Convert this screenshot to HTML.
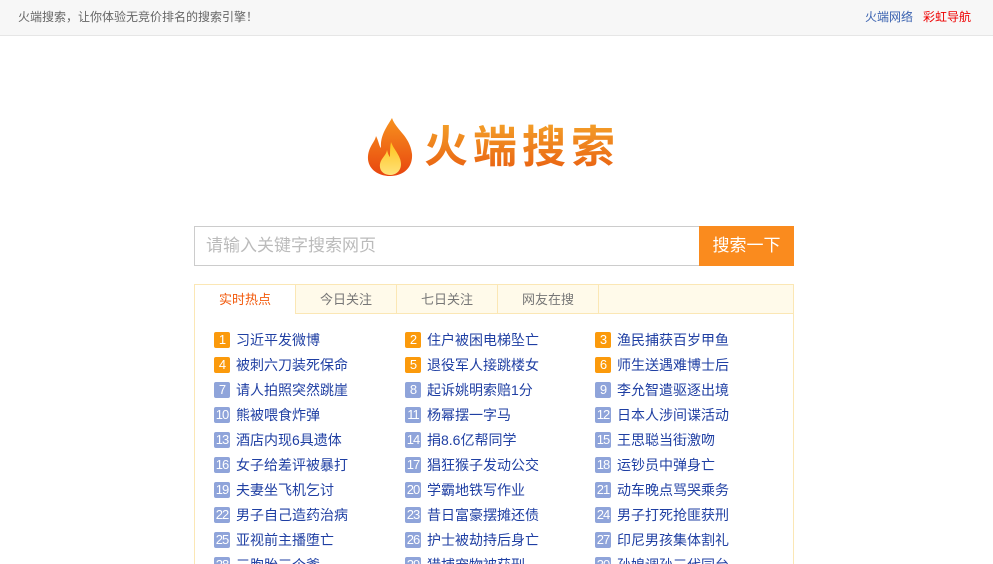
<!DOCTYPE html>
<html style="overflow:hidden;height:564px"><head><meta charset="utf-8"><style>
*{margin:0;padding:0;box-sizing:border-box}
body{width:993px;height:564px;overflow:hidden;background:#fff;font-family:"Liberation Sans","Noto Sans CJK SC",sans-serif;position:relative}
.top{height:36px;background:#f7f7f7;border-bottom:1px solid #e6e6e6;font-size:12px;color:#666;line-height:34px;padding-left:18px;position:relative}
.top .r{position:absolute;right:22px;top:0}
.top .r a{color:#3a62b0;text-decoration:none;margin-left:10px}
.top .r a.red{color:#e00}
.logo{position:absolute;left:366px;top:116px}
.lt{position:absolute;left:424px;top:120px;font-size:44px;font-weight:bold;letter-spacing:5px;background:linear-gradient(#f4a32a,#e85a0f);-webkit-background-clip:text;color:transparent;line-height:56px}
.sb{position:absolute;left:194px;top:226px;width:505px;height:40px;border:1px solid #ccc;border-right:none;font-size:17px;color:#bbb;line-height:38px;padding-left:11px}
.btn{position:absolute;left:699px;top:226px;width:95px;height:40px;background:#fa8b1e;color:#fff;font-size:17px;line-height:40px;text-align:center}
.box{position:absolute;left:194px;top:284px;width:600px;height:300px;border:1px solid #fbe7b5}
.tabs{height:29px;background:#fffaea;border-bottom:1px solid #fbe7b5;display:flex}
.tabs div{width:101px;text-align:center;font-size:13px;color:#777;line-height:29px;border-right:1px solid #fbe7b5}
.tabs div.a{background:#fff;color:#f25a0d;height:29px}
.item{position:absolute;font-size:14px;color:#1f3fa3;line-height:18px;white-space:nowrap;display:flex;align-items:center}
.item b{display:inline-block;width:16px;height:16px;border-radius:2px;background:#8fa4da;color:#fff;font-weight:normal;font-size:13px;text-align:center;line-height:16px;margin-right:6px;letter-spacing:-1px}
.item b.o{background:#fb9a0c}
</style></head><body>
<div class="top">火端搜索，让你体验无竞价排名的搜索引擎！<div class="r"><a>火端网络</a><a class="red">彩虹导航</a></div></div>
<svg class="logo" width="48" height="62" viewBox="0 0 48 62"><defs><linearGradient id="g" x1="0" y1="0" x2="0" y2="1"><stop offset="0" stop-color="#f7921e"/><stop offset="1" stop-color="#e8450f"/></linearGradient><linearGradient id="h" x1="0" y1="0" x2="0" y2="1"><stop offset="0" stop-color="#ffc21a"/><stop offset="1" stop-color="#ffe27a"/></linearGradient></defs>
<path d="M26 2C30 14 44 20 46 38C47 52 37 60 24 60C11 60 1 52 2 40C3 30 9 26 10 20C13 26 13 30 15 32C14 20 20 12 26 2Z" fill="url(#g)"/>
<path d="M25 26C28 34 35 40 35 48C35 55 30 59 24 59C18 59 13 55 14 48C15 42 20 40 21 34C22 38 23 40 24 41C24 36 24 31 25 26Z" fill="url(#h)"/></svg>
<div class="lt">火端搜索</div>
<div class="sb">请输入关键字搜索网页</div>
<div class="btn">搜索一下</div>
<div class="box"><div class="tabs"><div class="a">实时热点</div><div>今日关注</div><div>七日关注</div><div>网友在搜</div></div></div>
<div class="item" style="left:214px;top:331px"><b class="o">1</b>习近平发微博</div>
<div class="item" style="left:405px;top:331px"><b class="o">2</b>住户被困电梯坠亡</div>
<div class="item" style="left:595px;top:331px"><b class="o">3</b>渔民捕获百岁甲鱼</div>
<div class="item" style="left:214px;top:356px"><b class="o">4</b>被刺六刀装死保命</div>
<div class="item" style="left:405px;top:356px"><b class="o">5</b>退役军人接跳楼女</div>
<div class="item" style="left:595px;top:356px"><b class="o">6</b>师生送遇难博士后</div>
<div class="item" style="left:214px;top:381px"><b>7</b>请人拍照突然跳崖</div>
<div class="item" style="left:405px;top:381px"><b>8</b>起诉姚明索赔1分</div>
<div class="item" style="left:595px;top:381px"><b>9</b>李允智遣驱逐出境</div>
<div class="item" style="left:214px;top:406px"><b>10</b>熊被喂食炸弹</div>
<div class="item" style="left:405px;top:406px"><b>11</b>杨幂摆一字马</div>
<div class="item" style="left:595px;top:406px"><b>12</b>日本人涉间谍活动</div>
<div class="item" style="left:214px;top:431px"><b>13</b>酒店内现6具遗体</div>
<div class="item" style="left:405px;top:431px"><b>14</b>捐8.6亿帮同学</div>
<div class="item" style="left:595px;top:431px"><b>15</b>王思聪当街激吻</div>
<div class="item" style="left:214px;top:456px"><b>16</b>女子给差评被暴打</div>
<div class="item" style="left:405px;top:456px"><b>17</b>猖狂猴子发动公交</div>
<div class="item" style="left:595px;top:456px"><b>18</b>运钞员中弹身亡</div>
<div class="item" style="left:214px;top:481px"><b>19</b>夫妻坐飞机乞讨</div>
<div class="item" style="left:405px;top:481px"><b>20</b>学霸地铁写作业</div>
<div class="item" style="left:595px;top:481px"><b>21</b>动车晚点骂哭乘务</div>
<div class="item" style="left:214px;top:506px"><b>22</b>男子自己造药治病</div>
<div class="item" style="left:405px;top:506px"><b>23</b>昔日富豪摆摊还债</div>
<div class="item" style="left:595px;top:506px"><b>24</b>男子打死抢匪获刑</div>
<div class="item" style="left:214px;top:531px"><b>25</b>亚视前主播堕亡</div>
<div class="item" style="left:405px;top:531px"><b>26</b>护士被劫持后身亡</div>
<div class="item" style="left:595px;top:531px"><b>27</b>印尼男孩集体割礼</div>
<div class="item" style="left:214px;top:556px"><b>28</b>三胞胎三个爹</div>
<div class="item" style="left:405px;top:556px"><b>29</b>猎捕宠物被获刑</div>
<div class="item" style="left:595px;top:556px"><b>30</b>孙媳调孙三代同台</div>
</body></html>
